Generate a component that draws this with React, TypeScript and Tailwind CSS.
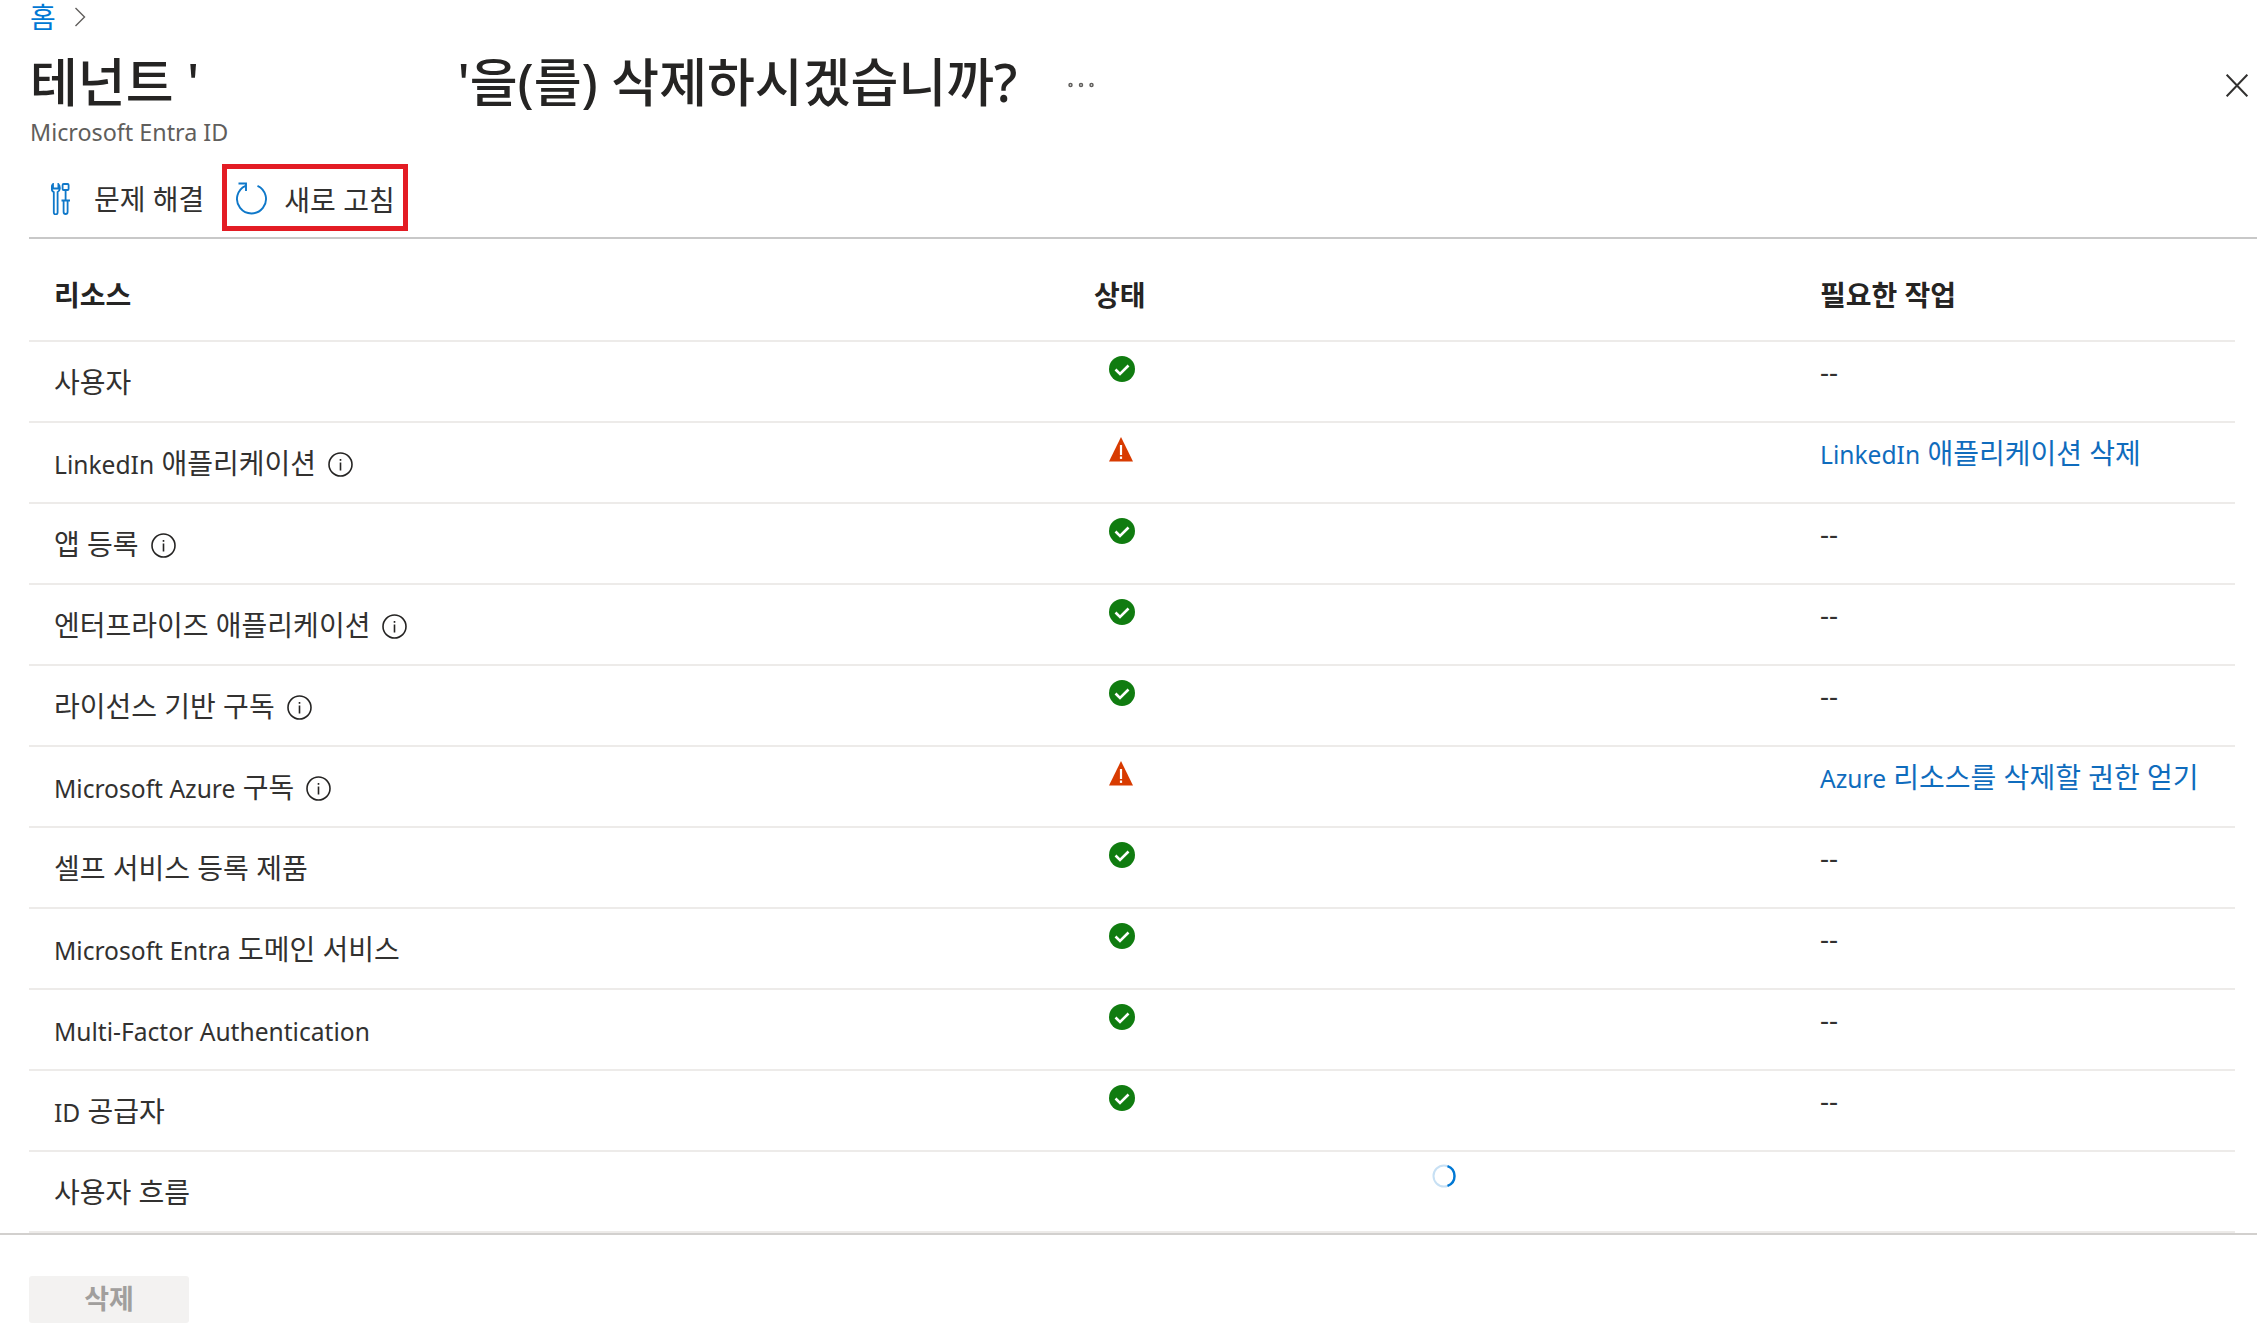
import { Ellipsis } from 'lucide-react';

interface ResourceRow {
  name: string;
  info?: boolean;
  status: 'ok' | 'warn' | 'loading';
  action?: string;
  link?: boolean;
}

const rows: ResourceRow[] = [
  { name: '사용자', status: 'ok', action: '--' },
  { name: 'LinkedIn 애플리케이션', info: true, status: 'warn', action: 'LinkedIn 애플리케이션 삭제', link: true },
  { name: '앱 등록', info: true, status: 'ok', action: '--' },
  { name: '엔터프라이즈 애플리케이션', info: true, status: 'ok', action: '--' },
  { name: '라이선스 기반 구독', info: true, status: 'ok', action: '--' },
  { name: 'Microsoft Azure 구독', info: true, status: 'warn', action: 'Azure 리소스를 삭제할 권한 얻기', link: true },
  { name: '셀프 서비스 등록 제품', status: 'ok', action: '--' },
  { name: 'Microsoft Entra 도메인 서비스', status: 'ok', action: '--' },
  { name: 'Multi-Factor Authentication', status: 'ok', action: '--' },
  { name: 'ID 공급자', status: 'ok', action: '--' },
  { name: '사용자 흐름', status: 'loading' },
];

// latin runs sit smaller than the hangul next to them
function MixedText({ text }: { text: string }) {
  const parts = text.split(/([A-Za-z][A-Za-z\- ]*[A-Za-z])/);
  return (
    <span>
      {parts.map((part, i) =>
        i % 2 === 1 ? (
          <span key={i} className="text-[24.6px]">{part}</span>
        ) : (
          <span key={i}>{part}</span>
        )
      )}
    </span>
  );
}

function InfoIcon() {
  return (
    <svg width="25" height="25" viewBox="0 0 25 25" className="shrink-0 mt-[4px]">
      <circle cx="12.5" cy="12.5" r="11.5" fill="none" stroke="#252423" strokeWidth="1.6" />
      <rect x="11.7" y="10.5" width="1.6" height="8" fill="#252423" />
      <rect x="11.7" y="7" width="1.6" height="1.8" fill="#252423" />
    </svg>
  );
}

function CheckIcon() {
  return (
    <svg width="26" height="26" viewBox="0 0 26 26">
      <circle cx="13" cy="13" r="13" fill="#107c10" />
      <path d="M6.5 13.5l4.5 4.5 8.5-8.5" fill="none" stroke="#fff" strokeWidth="2.6" />
    </svg>
  );
}

function WarnIcon() {
  return (
    <svg width="24" height="25" viewBox="0 0 24 25">
      <path d="M12 0L24 24.5H0z" fill="#d83b01" />
      <rect x="10.9" y="8" width="2.2" height="10" fill="#fff" />
      <rect x="10.9" y="19.5" width="2.2" height="2.4" fill="#fff" />
    </svg>
  );
}

function Spinner() {
  return (
    <svg width="24" height="24" viewBox="0 0 24 24">
      <circle cx="12" cy="12" r="10.5" fill="none" stroke="#c7e0f4" strokeWidth="2" />
      <path d="M15.5 2.1A10.5 10.5 0 0 1 15.5 21.9" fill="none" stroke="#0078d4" strokeWidth="2.4" />
    </svg>
  );
}

function TroubleshootIcon() {
  return (
    <svg width="20" height="32" viewBox="0 0 20 32" fill="none" stroke="#0f78c9" strokeWidth="1.8" className="mt-[3px]">
      <path d="M2 1.2C-.2 3.5.2 8 2.800 9v20.500a1.900 1.900 0 0 0 3.800 0V9c2.600-1 3-5.500.8-7.800v4.300H2z" />
      <rect x="11.6" y="1" width="6" height="6" rx="1" />
      <path d="M14.600 7v10M10.500 17.500h8.500" />
      <path d="M12.600 17.500V29a2 2 0 0 0 4 0V17.500" />
    </svg>
  );
}

function RefreshIcon() {
  return (
    <svg width="32" height="33" viewBox="0 0 32 33" fill="none" stroke="#0f78c9" strokeWidth="1.9" className="mt-[2px]">
      <path d="M9.500 3.800A14.500 14.500 0 1 0 21.500 3.800" />
      <path d="M2.500 1.500H10V9" />
    </svg>
  );
}

function CloseIcon() {
  return (
    <svg width="22" height="23" viewBox="0 0 22 23" fill="none" stroke="#323130" strokeWidth="2" className="ml-auto mt-[6px]">
      <path d="M.7.700l20.600 21.600M21.300.700L.7 22.300" />
    </svg>
  );
}

function StatusIcon({ status }: { status: ResourceRow['status'] }) {
  if (status === 'ok') return <CheckIcon />;
  if (status === 'warn') return <WarnIcon />;
  return <Spinner />;
}

export default function App() {
  return (
    <div className="w-[2257px] h-[1343px] overflow-hidden bg-white flex flex-col text-[#323130] font-['Noto_Sans','Noto_Sans_CJK_KR',sans-serif]">
      <div className="h-[34px] pl-[30px] flex items-center gap-[18px] shrink-0">
        <a className="block text-[#0078d4] text-[28px] leading-[34px]">홈</a>
        <svg width="12" height="20" viewBox="0 0 12 20" fill="none" stroke="#605e5c" strokeWidth="1.4">
          <path d="M1.5 1l9 9-9 9" />
        </svg>
      </div>

      <div className="h-[80px] pl-[30px] pr-[9px] pt-[16px] flex items-center shrink-0">
        <h1 className="text-[52px] font-medium text-[#252423] leading-[64px] whitespace-pre">테넌트 '</h1>
        <h1 className="ml-[258px] text-[52px] font-medium text-[#252423] leading-[64px] whitespace-pre">'을(를) 삭제하시겠습니까?</h1>
        <Ellipsis size={36} strokeWidth={1} className="ml-[46px] text-[#605e5c] mt-[6px]" />
        <CloseIcon />
      </div>

      <div className="pl-[30px] text-[23.3px] leading-[36px] text-[#605e5c] h-[40px] shrink-0">Microsoft Entra ID</div>

      <div className="ml-[29px] h-[85px] border-b-2 border-[#c8c8c8] flex items-start shrink-0">
        <div className="flex items-center gap-[23px] pl-[22px] h-[64px] pt-[2px] mt-[10px] text-[28px]">
          <TroubleshootIcon />
          <span className="mt-[4px]">문제 해결</span>
        </div>
        <div className="ml-[18px] w-[186px] h-[67px] mt-[10px] border-[5px] border-[#e31c24] flex items-center gap-[16px] pl-[9px] text-[28px]">
          <RefreshIcon />
          <span className="mt-[4px]">새로 고침</span>
        </div>
      </div>

      <div className="ml-[29px] w-[2206px] grow">
        <div className="grid grid-cols-[1065px_726px_1fr] h-[103px] pt-[11px] border-b-2 border-[#edebe9] items-center text-[28px] font-bold text-[#252423]">
          <div className="pl-[25px]">리소스</div>
          <div>상태</div>
          <div>필요한 작업</div>
        </div>

        {rows.map((row) => (
          <div key={row.name} className="grid grid-cols-[1065px_726px_1fr] h-[81px] border-b-2 border-[#edebe9] text-[28px]">
            <div className="pl-[25px] flex items-center gap-[12px]">
              <MixedText text={row.name} />
              {row.info && <InfoIcon />}
            </div>
            <div className={row.status === 'loading' ? 'pl-[338px] pt-[12px]' : 'pl-[15px] pt-[14px]'}>
              <StatusIcon status={row.status} />
            </div>
            <div className={row.link ? 'pt-[9px] text-[#0f6cbd]' : 'pt-[8px]'}>
              {row.action && <MixedText text={row.action} />}
            </div>
          </div>
        ))}
      </div>

      <div className="h-[110px] shrink-0 border-t-2 border-[#d2d0ce] pl-[29px] pt-[41px]">
        <button className="w-[160px] h-[47px] bg-[#f3f2f1] rounded-[3px] text-[#a19f9d] text-[27px] font-bold">삭제</button>
      </div>
    </div>
  );
}
